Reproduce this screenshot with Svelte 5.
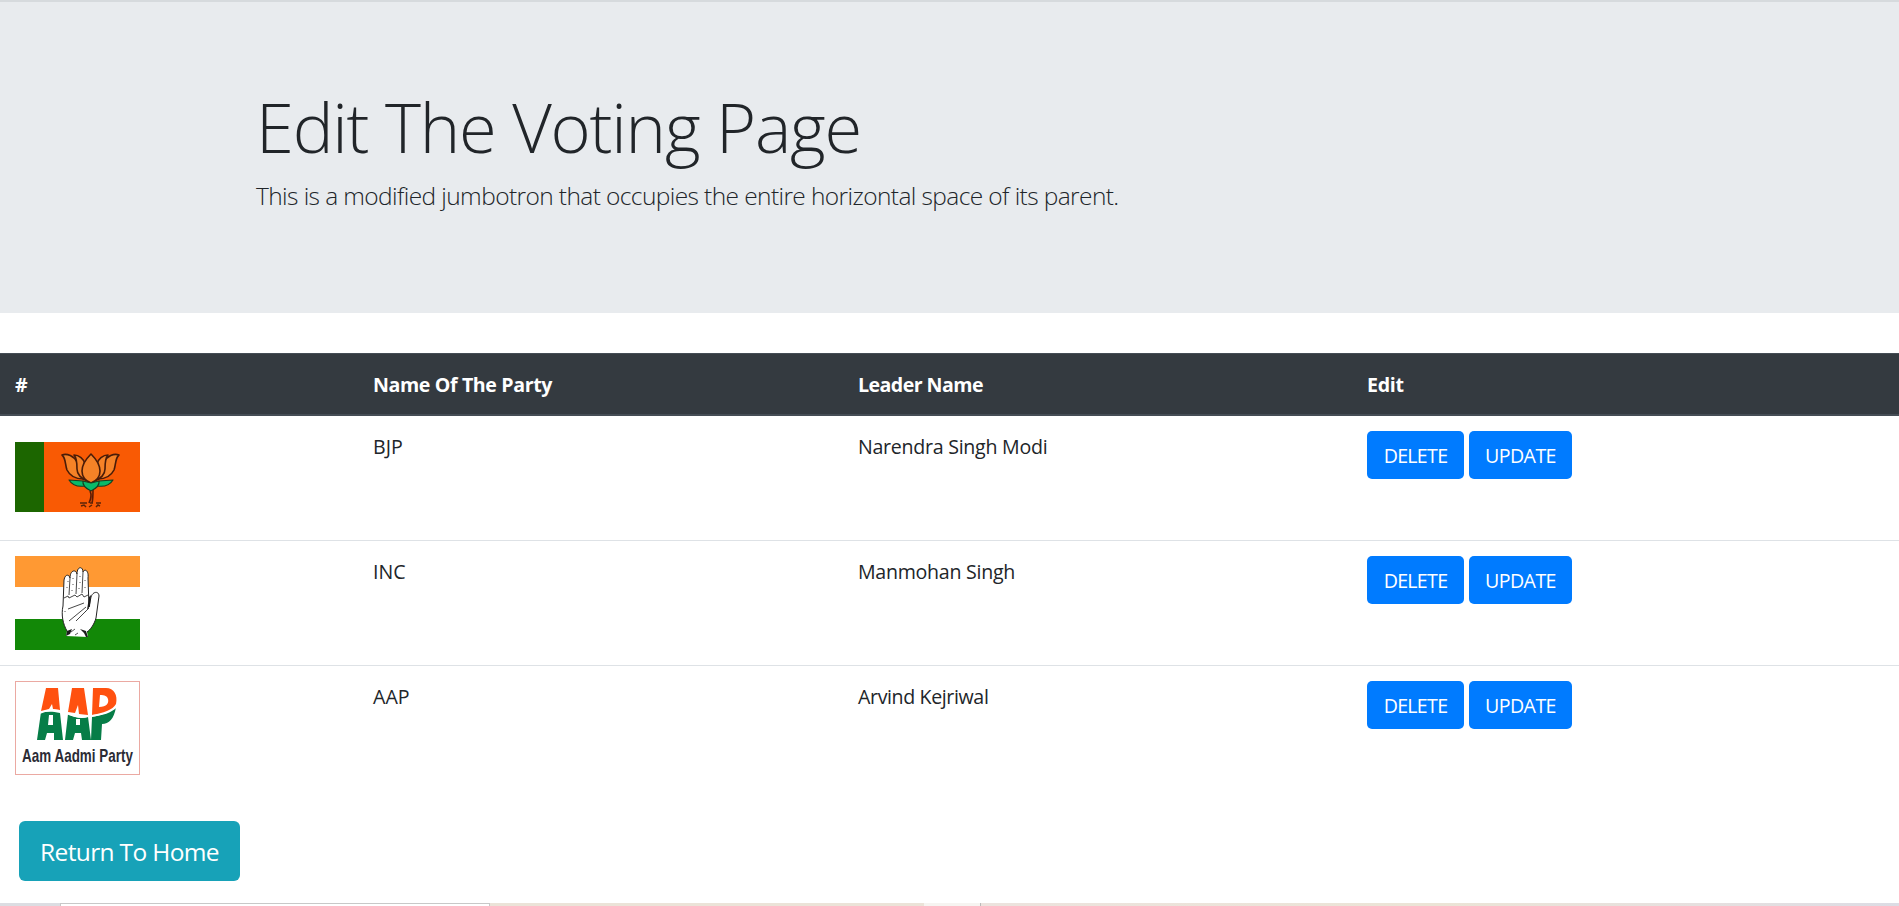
<script>
  const parties = [
    { id: 'bjp', name: 'BJP', leader: 'Narendra Singh Modi' },
    { id: 'inc', name: 'INC', leader: 'Manmohan Singh' },
    { id: 'aap', name: 'AAP', leader: 'Arvind Kejriwal' }
  ];
</script>

<div class="page">
  <header class="jumbotron">
    <div class="container">
      <h1>Edit The Voting Page</h1>
      <p>This is a modified jumbotron that occupies the entire horizontal space of its parent.</p>
    </div>
  </header>

  <div class="table">
    <div class="row head">
      <div class="cell">#</div>
      <div class="cell party-h">Name Of The Party</div>
      <div class="cell leader-h">Leader Name</div>
      <div class="cell edit-h">Edit</div>
    </div>
    {#each parties as p}
      <div class="row body">
        <div class="cell logo">
          {#if p.id === 'bjp'}
            <svg class="flag" viewBox="0 0 125 94">
              <rect y="11" width="125" height="70" fill="#f95a04" />
              <rect y="11" width="29" height="70" fill="#1c6600" />
              <g stroke="#4a1c08" stroke-width="1.6" stroke-linejoin="round" fill="#f58227">
                <path d="M47 24C52 22 59 25 62 31L68 48C60 48 55 45 52 39C50 34 51 27 47 24Z" />
                <path d="M104 24C99 22 92 25 89 31L83 48C91 48 96 45 99 39C101 34 100 27 104 24Z" />
                <path d="M59 24C64 24 69 28 70 33L73 50C66 48 62 43 62 38C62 33 62 27 59 24Z" />
                <path d="M93 24C88 24 83 28 82 33L79 50C86 48 90 43 90 38C90 33 90 27 93 24Z" />
                <path d="M76 23C82 29 85 34 85 40C85 46 81 50 76 52C71 50 67 46 67 40C67 34 70 29 76 23Z" />
              </g>
              <g stroke="#173c20" stroke-width="1.1" stroke-linejoin="round" fill="#09ba69">
                <path d="M54 49L68 50L70 55C63 56 57 54 54 49Z" />
                <path d="M98 49L84 50L82 55C89 56 95 54 98 49Z" />
                <path d="M68 50L76 52L84 50C85 55 80 58 76 60C72 58 67 55 68 50Z" />
              </g>
              <path d="M75 60C77 64 76 68 74 72M78 59C78 64 78 68 77 72" fill="none" stroke="#5b1b05" stroke-width="1.6" />
              <path d="M65 72h7m3 0h3m3 0h5M66 75l3-1 2 2M74 76l3-2m4 2l2-2 2 1" fill="none" stroke="#5b2408" stroke-width="1.5" />
            </svg>
          {:else if p.id === 'inc'}
            <svg class="flag" viewBox="0 0 125 94">
              <rect width="125" height="94" fill="#fff" />
              <rect width="125" height="31" fill="#ff9933" />
              <rect y="63" width="125" height="31" fill="#128807" />
              <path d="M51 80L52 75C48 68 46 59 48 50L49 24C50 18 54 18 55 22C55 14 61 13 62 18C62 10 68 10 68 16C70 12 74 15 73 22L74 51L76 41C78 35 84 35 84 40L81 62C79 69 75 74 72 76L73 81Z" fill="#fff" />
              <path d="M52 75C48 68 46 59 48 50L49 24C50 18 54 18 55 22C55 14 61 13 62 18C62 10 68 10 68 16C70 12 74 15 73 22L74 51L76 41C78 35 84 35 84 40L81 62C79 69 75 74 72 76" fill="none" stroke="#222" stroke-width="1" stroke-linejoin="round" />
              <path d="M55 22L54 39M62 18L61 38M68 16L67 37" fill="none" stroke="#333" stroke-width=".9" />
              <path d="M49 42l4-2 1 2 6-3 2 2 5-3 2 3 4-2M53 53l16-6M54 65l17-14M61 65l10-10M70 56l4-4" fill="none" stroke="#333" stroke-width=".9" />
              <path d="M74 41l2-2-1 11-3 4ZM51 80l1-5 5-2-2 5ZM65 73l6 2 2 6-2 0-2-4Z" fill="#1c1c1c" />
              <path d="M53 25v1M52 31v1M58 22v1M58 28v1M57 34v1M65 20v1M65 26v1M64 32v1M70 24v1M70 31v1M50 55v1M56 76l4-3M60 79l3-2" stroke="#555" stroke-width="1" />
            </svg>
          {:else}
            <svg class="flag" viewBox="0 0 125 94">
              <rect x=".5" y=".5" width="124" height="93" fill="#fff" stroke="#eba9a2" />
              <g fill="#ff5110">
                <path d="M31 7H43L45 29L38 28L37 23L34 28L26 30Z" />
                <path d="M57 7H69L73 34L64 33L63 24L60 32L53 31Z" />
                <path fill-rule="evenodd" d="M78 7H91C99 7 103 14 101 23C98 29 88 32 77 34ZM85 14L84 26C92 26 94 22 93 18C92 15 90 14 85 14Z" />
              </g>
              <g fill="#067d47">
                <path d="M26 31C32 31 37 30 45 32L48 59H39V52H32L30 59H22Z" />
                <path d="M53 33C60 37 67 38 73 36L76 59H67L66 52H60L58 59H50Z" />
                <path d="M77 36C87 34 96 31 101 26C99 38 94 43 87 43L86 59H76Z" />
              </g>
              <path d="M25 32Q38 26 51 32T74 35Q94 34 102 25" fill="none" stroke="#fff" stroke-width="1.6" />
              <path d="M34 34H38V44H33ZM61 38H65V44H61Z" fill="#fff" />
              <text transform="translate(7 81) scale(.745 1)" textLength="149">Aam Aadmi Party</text>
            </svg>
          {/if}
        </div>
        <div class="cell name">{p.name}</div>
        <div class="cell leader {p.id}">{p.leader}</div>
        <div class="cell actions">
          <button class="delete">DELETE</button>
          <button class="update">UPDATE</button>
        </div>
      </div>
    {/each}
  </div>

  <button class="home">Return To Home</button>
  <div class="edge"><i class="e1"></i><i class="e2"></i><i class="e3"></i><i class="e4"></i><i class="e5"></i><i class="e6"></i></div>
</div>

<style>
  :global(body) { margin: 0; background: #fff; }
  * { box-sizing: border-box; }
  .page {
    display: flex; flex-direction: column; align-items: flex-start;
    height: 906px; overflow: hidden;
    font: 400 19.6px/30px "Open Sans", "Noto Sans", sans-serif; color: #212529;
  }
  .jumbotron { width: 100%; height: 313px; background: #e8ebee; border-top: 2px solid #d6dadd; }
  .container { padding: 83px 0 0 256px; }
  h1 { margin: 0; font-size: 68.6px; line-height: 84px; font-weight: 300; letter-spacing: -1.2px; white-space: nowrap; }
  p { margin: 8px 0 0; font-size: 24.5px; line-height: 38px; font-weight: 300; letter-spacing: -.6px; white-space: nowrap; }
  .table { width: 100%; margin-top: 40px; }
  .row { display: grid; grid-template-columns: 358px 485px 509px 1fr; }
  .cell { padding: 16px 15px 14px; white-space: nowrap; }
  .cell.logo, .cell.actions { padding-top: 15px; }
  .head { height: 63px; color: #fff; font-weight: 700; background: #343a40; border-top: 1px solid #454d55; border-bottom: 2px solid #454d55; }
  .party-h { letter-spacing: -.38px; }
  .leader-h { letter-spacing: -.55px; }
  .edit-h { letter-spacing: -.3px; }
  .leader { letter-spacing: -.27px; }
  .leader.aap { letter-spacing: -.38px; }
  .body { height: 124px; }
  .body + .body { height: 125px; border-top: 1px solid #dee2e6; }
  .flag { display: block; width: 125px; height: 94px; overflow: visible; }
  .flag text { font: 700 18px "Liberation Sans", Arial, sans-serif; fill: #2b2b35; }
  .actions { display: flex; align-items: flex-start; gap: 5px; }
  button { border: 0; border-radius: 5px; color: #fff; background: #007bff; font: inherit; padding: 2px 0 0; height: 48px; white-space: nowrap; }
  .delete { width: 97px; letter-spacing: -.7px; }
  .update { width: 103px; letter-spacing: -.6px; }
  .home { width: 221px; height: 60px; margin: 31px 0 0 19px; border-radius: 6px; background: #17a2b8; font-size: 24.5px; letter-spacing: -.65px; }
  .edge { display: flex; width: 100%; height: 3px; margin-top: auto; }
  .e1 { width: 60px; background: #dcdde2; }
  .e2 { width: 430px; background: #fff; border: 1px solid #c8c8c8; border-bottom: 0; }
  .e3 { width: 434px; background: #ebe3d8; }
  .e4 { width: 56px; background: #f6f4f1; }
  .e5 { width: 1px; background: #bbb; }
  .e6 { flex: 1; background: linear-gradient(90deg, #ece3de, #ebe4d6 50%, #e6e0df 78%, #dcdce4); }
</style>
